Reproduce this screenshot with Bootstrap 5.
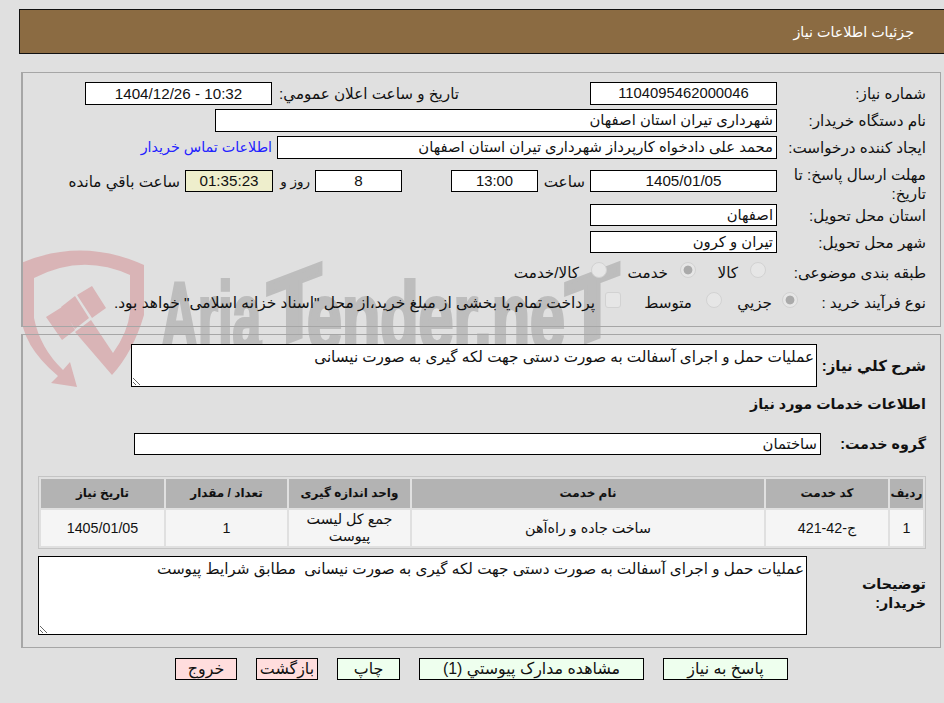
<!doctype html>
<html lang="fa" dir="rtl">
<head>
<meta charset="utf-8">
<link href="https://cdn.jsdelivr.net/npm/bootstrap@5.3.0/dist/css/bootstrap.min.css" rel="stylesheet">
<style>
html,body{height:100%}
body{background:#e0e0e0;color:#111;font-family:"Liberation Sans","DejaVu Sans",sans-serif;font-size:15.2px;line-height:19px;position:relative;overflow:hidden}
.page{position:relative;z-index:1;width:944px;height:703px}
.wmark{position:absolute;left:20px;top:245px;z-index:0;direction:ltr}
.wmark text{font-family:"Liberation Sans",sans-serif;font-weight:700;fill:#bdbdbd;stroke:#bdbdbd;stroke-width:4px}
.wmark .shld{fill:#d9b4b6}
.head-bar{margin:9px 0 0 0;width:925px;height:45px;background:#8b6b42;border:1px solid #111;border-right:0;color:#fff;padding:13px 30px 0 0;font-size:14.3px}
.box{margin-right:3px;width:920px;border:1px solid #a6a6a6;border-left-width:2px;padding-right:14px}
.box-a{margin-top:18px;height:255px;padding-top:9px}
.box-b{margin-top:7px;height:314px;padding-top:9px}
.rw{display:flex;align-items:center}
.lb{width:149px;flex:none}
.fld{background:#fff;border:1px solid #000;height:23px;line-height:21px;padding:0 3px;flex:none;white-space:nowrap;overflow:hidden;font-size:14.8px}
.fld.short{height:22px;line-height:20px}
.fld.dg{font-size:15.2px}
.ctr{text-align:center}
.w187{width:187px}
.w562{width:562px}
.w500{width:500px}
.w87{width:87px}
.w88{width:88px}
.w687{width:687px}
.gap4{margin-top:4px}
.gap-after{width:131px;flex:none}
.lb2{width:187px;padding-left:6px;flex:none;white-space:nowrap}
.row-dead{height:38px;margin-top:6px;align-items:flex-start}
.row-dead .fld{margin-top:5px}
.row-dead .plain{margin-top:7px}
.tm{background:#eeeecc}
.slot-h{width:52px;padding-right:5px;flex:none}
.gap49{width:49px;flex:none}
.slot-r{width:42px;padding-right:5px;flex:none;font-size:13.5px}
.ms5{margin-right:5px}
.mt1{margin-top:1px}
.mt5{margin-top:5px}
.opt-row{height:24px}
.mt7{margin-top:7px}
.mt6{margin-top:6px}
.rad,.chk{appearance:none;width:16px;height:16px;border:1px solid #d2d2d2;background:#e6e6e6;margin:0;flex:none;position:relative;top:-2px}
.rad{border-radius:50%}
.chk{border-radius:3px}
.rad.on{background:radial-gradient(circle,#aaa 0 4px,#e6e6e6 4.8px)}
.first-a{margin-right:11px}
.first-b{margin-right:-21px}
.opt{display:flex;align-items:center;flex:none}
.opt span{white-space:nowrap}
.opt span.long{font-size:15.45px}
.ow70{width:70px}.ow89{width:89px}.ow76{width:76px}.ow101{width:101px}
.g12 span{margin-right:12px}.g10 span{margin-right:10px}.g14 span{margin-right:14px}
.lnk{color:#22f;text-decoration:none;margin-right:5px;white-space:nowrap;font-size:14.3px}
.plain{white-space:nowrap}
.bold{font-weight:700;font-size:14.3px;white-space:nowrap}
.bold.big{font-size:15px}
.bw109{width:109px;flex:none}
.bw105{width:105px;flex:none}
.bw119{width:119px;flex:none;line-height:19px;margin-top:-3px}
.st7{margin-top:8px}
.st19{margin-top:19px}
textarea.tx{display:block;background:#fff;border:1px solid #000;border-radius:0;padding:2px;color:#111;font:inherit;margin:0;flex:none;outline:0}
.ta-a{width:686px;height:43px}
.ta-b{width:769px;height:79px}
.rb{margin-top:7px;height:79px}
.grid-t{width:888px;margin:21px 0 0 0;border-collapse:separate;border-spacing:2px;border:1px solid #c4c4c4;--bs-table-bg:transparent;table-layout:fixed}
.grid-t th,.grid-t td{padding:0 6px;text-align:center;vertical-align:middle;border:0;box-shadow:none;color:#111}
.grid-t th{background:#b3b3b3;height:29px;font-size:12px;font-weight:700;padding:0}
.grid-t td{background:#f5f5f5;height:36px;line-height:17px;font-size:14.3px}
.c33{width:33px}.c122{width:122px}.c352{width:352px}.c121{width:121px}.c123{width:123px}
.foot-row{display:flex;gap:19px;margin:10px 156px 0 0}
.act{height:22px;line-height:20px;padding:0;border:1px solid #000;border-radius:0;color:#111;font-size:15.9px;white-space:nowrap}
.act-g,.act-g:hover{background:#eeffee}
.act-r,.act-r:hover{background:#ffdddd}
.b125{width:125px}.b225{width:225px}.b63{width:63px}.b62{width:62px}
</style>
</head>
<body>
<svg class="wmark" width="610" height="150" viewBox="0 0 610 150" aria-hidden="true">
  <path class="shld" d="M1 18 Q62 -8 124 20 V70 Q113 107 92 130 L55 87 L71 75 L93 108 Q108 87 110 67 V30 Q62 8 14 33 V73 Q20 103 43 125 L50 117 L57 142 L31 138 L38 131 Q1 100 1 67Z"/>
  <path class="shld" d="M26 72 L42 62 L55 85 L42 95Z M41 62 L55 51 L69 73 L55 84Z M57 50 L72 41 L86 63 L72 73Z"/>
  <text x="141" y="105" font-size="96" textLength="100" lengthAdjust="spacingAndGlyphs">Aria</text>
  <text font-size="96" transform="translate(247,105) skewY(-21) scale(.93,1)">T</text>
  <text x="287" y="105" font-size="96" textLength="258" lengthAdjust="spacingAndGlyphs">ender.ne</text>
  <text font-size="96" transform="translate(545,105) skewY(-21) scale(.93,1)">T</text>
</svg>
<div class="page">
  <div class="head-bar">جزئيات اطلاعات نياز</div>
  <div class="box box-a">
    <div class="rw">
      <div class="lb">شماره نياز:</div>
      <div class="fld w187 ctr">1104095462000046</div>
      <div class="gap-after"></div>
      <div class="lb2">تاريخ و ساعت اعلان عمومي:</div>
      <div class="fld dg w187 ctr" dir="ltr">1404/12/26 - 10:32</div>
    </div>
    <div class="rw gap4">
      <div class="lb">نام دستگاه خريدار:</div>
      <div class="fld w562">شهرداری تيران استان اصفهان</div>
    </div>
    <div class="rw gap4">
      <div class="lb">ايجاد كننده درخواست:</div>
      <div class="fld w500">محمد علی دادخواه کارپرداز شهرداری تيران استان اصفهان</div>
      <a class="lnk" href="#">اطلاعات تماس خريدار</a>
    </div>
    <div class="rw row-dead">
      <div class="lb">مهلت ارسال پاسخ: تا تاريخ:</div>
      <div class="fld dg short w187 ctr" dir="ltr">1405/01/05</div>
      <div class="plain slot-h">ساعت</div>
      <div class="fld short ctr w87">13:00</div>
      <div class="gap49"></div>
      <div class="fld dg short ctr w87">8</div>
      <div class="plain slot-r">روز و</div>
      <div class="fld dg short ctr tm w88">01:35:23</div>
      <div class="plain ms5">ساعت باقي مانده</div>
    </div>
    <div class="rw mt1">
      <div class="lb">استان محل تحويل:</div>
      <div class="fld short w187">اصفهان</div>
    </div>
    <div class="rw mt5">
      <div class="lb">شهر محل تحويل:</div>
      <div class="fld short w187">تيران و کرون</div>
    </div>
    <div class="rw opt-row mt7">
      <div class="lb">طبقه بندی موضوعی:</div>
      <div class="opt ow70 g12 first-a"><input class="rad" type="radio" disabled><span>کالا</span></div>
      <div class="opt ow89 g12"><input class="rad on" type="radio" disabled><span>خدمت</span></div>
      <div class="opt g12"><input class="rad" type="radio" disabled><span>کالا/خدمت</span></div>
    </div>
    <div class="rw opt-row mt6">
      <div class="lb">نوع فرآيند خريد :</div>
      <div class="opt ow76 g10 first-b"><input class="rad on" type="radio" disabled><span>جزيي</span></div>
      <div class="opt ow101 g14"><input class="rad" type="radio" disabled><span>متوسط</span></div>
      <div class="opt g10"><input class="chk" type="checkbox" disabled><span class="long">پرداخت تمام يا بخشی از مبلغ خريد،از محل "اسناد خزانه اسلامی" خواهد بود.</span></div>
    </div>
  </div>
  <div class="box box-b">
    <div class="rw">
      <div class="bold big bw109">شرح كلي نياز:</div>
      <textarea class="tx ta-a" readonly>عمليات حمل و اجرای آسفالت به صورت دستی جهت لکه گيری به صورت نيسانی</textarea>
    </div>
    <div class="bold st7">اطلاعات خدمات مورد نياز</div>
    <div class="rw st19">
      <div class="bold bw105">گروه خدمت:</div>
      <div class="fld short w687">ساختمان</div>
    </div>
    <table class="table grid-t">
      <colgroup><col class="c33"><col class="c122"><col class="c352"><col class="c121"><col class="c121"><col class="c123"></colgroup>
      <thead><tr><th>رديف</th><th>کد خدمت</th><th>نام خدمت</th><th>واحد اندازه گيری</th><th>تعداد / مقدار</th><th>تاريخ نياز</th></tr></thead>
      <tbody><tr><td>1</td><td>ج-42-421</td><td>ساخت جاده و راه‌آهن</td><td>جمع کل ليست پيوست</td><td>1</td><td>1405/01/05</td></tr></tbody>
    </table>
    <div class="rw rb">
      <div class="bold bw119">توضيحات<br>خريدار:</div>
      <textarea class="tx ta-b" readonly>عمليات حمل و اجرای آسفالت به صورت دستی جهت لکه گيری به صورت نيسانی  مطابق شرايط پيوست</textarea>
    </div>
  </div>
  <div class="foot-row">
    <button type="button" class="btn act act-g b125">پاسخ به نياز</button>
    <button type="button" class="btn act act-g b225">مشاهده مدارک پيوستي (1)</button>
    <button type="button" class="btn act act-g b63">چاپ</button>
    <button type="button" class="btn act act-r b62">بازگشت</button>
    <button type="button" class="btn act act-r b62">خروج</button>
  </div>
</div>
<script src="https://cdn.jsdelivr.net/npm/bootstrap@5.3.0/dist/js/bootstrap.bundle.min.js"></script>
</body>
</html>
